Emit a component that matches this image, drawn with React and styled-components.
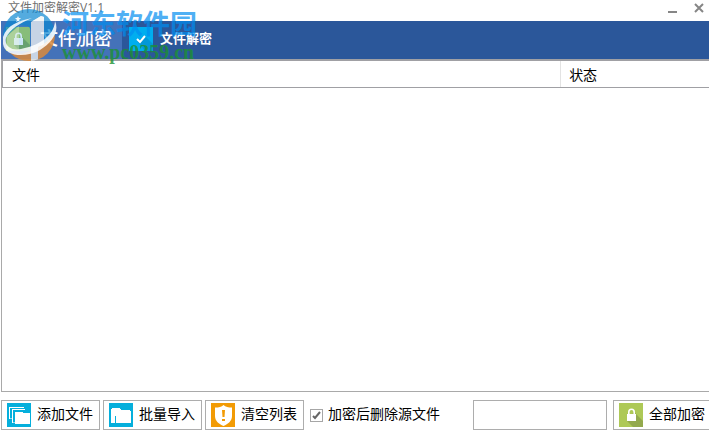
import { useState } from "react";
import styled, { createGlobalStyle } from "styled-components";

const GlobalStyle = createGlobalStyle`
  * {
    box-sizing: border-box;
  }

  body {
    margin: 0;
    background-color: #fff;
    color: #000;
    font-family: "Liberation Sans", "Noto Sans CJK SC", sans-serif;
    font-size: 14px;
    overflow: hidden;
  }

  button,
  input {
    font: inherit;
    color: inherit;
  }
`;

const Window = styled.div`
  position: relative;
  display: flex;
  flex-direction: column;
  height: 100vh;
  overflow: hidden;
`;

const TitleBar = styled.header`
  display: flex;
  justify-content: space-between;
  align-items: center;
  height: 21px;
  padding: 0 4px 5px 8px;
`;

const Title = styled.h1`
  margin: 0;
  font-family: "Open Sans", "Noto Sans CJK SC", sans-serif;
  font-size: 12px;
  line-height: 16px;
  font-weight: 400;
  color: #707070;
`;

const WindowControls = styled.div`
  display: flex;
  gap: 14px;
`;

const ControlButton = styled.button`
  display: flex;
  padding: 0;
  border: 0;
  background: none;
  cursor: pointer;
`;

const TabBar = styled.nav`
  display: flex;
  height: 38px;
  margin-left: 1px;
  background-color: #2b579a;
`;

const Tab = styled.button`
  display: flex;
  align-items: center;
  gap: ${({ $active }) => ($active ? "10px" : "7px")};
  padding: ${({ $active }) => ($active ? "0 10px 2px 5px" : "0 10px 2px 7px")};
  border: 0;
  background-color: ${({ $active }) => ($active ? "#4472b9" : "transparent")};
  color: #fff;
  font-size: ${({ $active }) => ($active ? "18px" : "13px")};
  font-weight: ${({ $active }) => ($active ? "500" : "700")};
  white-space: nowrap;
  cursor: pointer;
`;

const Label = styled.span`
  padding-bottom: 4px;
`;

const FilePanel = styled.main`
  flex: 1;
  min-height: 0;
  margin-left: 1px;
  border: 1px solid #a9a9a9;
  border-top: 2px solid #a0a0a4;
  border-right: 0;
`;

const FileTable = styled.table`
  width: 100%;
  border-collapse: collapse;
  table-layout: fixed;
`;

const HeaderCell = styled.th`
  width: ${({ $width }) => $width || "auto"};
  height: 26px;
  padding: 2px 0 0 ${({ $first }) => ($first ? "9px" : "8px")};
  border-left: ${({ $first }) => ($first ? "1px solid #a0a0a4" : "1px solid #e3e3e3")};
  border-bottom: 1px solid #a0a0a4;
  font-weight: 400;
  line-height: 20px;
  text-align: left;
`;

const ActionBar = styled.footer`
  display: flex;
  align-items: center;
  gap: 3px;
  padding: 8px 0 15px 1px;
`;

const ActionButton = styled.button`
  display: flex;
  flex-shrink: 0;
  align-items: center;
  gap: 6px;
  width: 99px;
  height: 30px;
  padding: 0 5px;
  border: 1px solid #adadad;
  background-color: #fff;
  white-space: nowrap;
  cursor: pointer;

  svg {
    flex-shrink: 0;
  }
`;

const CheckOption = styled.label`
  display: flex;
  flex-shrink: 0;
  align-items: center;
  gap: 5px;
  margin-left: 3px;
  white-space: nowrap;
`;

const CheckFrame = styled.span`
  display: grid;

  > * {
    grid-area: 1 / 1;
  }

  svg {
    pointer-events: none;
  }

  input:not(:checked) + svg {
    visibility: hidden;
  }
`;

const CheckBox = styled.input`
  appearance: none;
  width: 13px;
  height: 13px;
  margin: 0;
  border: 1px solid #a6a6a6;
  background-color: #fff;
`;

const RightGroup = styled.div`
  display: flex;
  flex: 1;
  justify-content: flex-end;
  gap: 6px;
  min-width: 0;
  margin-right: -3px;
`;

const PasswordInput = styled.input`
  width: 134px;
  height: 30px;
  padding: 0 6px;
  border: 1px solid #adadad;
  background-color: #fff;
`;

const Watermark = styled.div`
  position: absolute;
  top: 8px;
  left: 2px;
  display: flex;
  gap: 5px;
  pointer-events: none;
`;

const WatermarkText = styled.div`
  display: flex;
  flex-direction: column;
  white-space: nowrap;
`;

const SiteName = styled.span`
  font-size: 27px;
  line-height: 34px;
  font-weight: 700;
  color: rgba(0, 141, 240, 0.7);
`;

const SiteUrl = styled.span`
  font-family: "Liberation Serif", serif;
  font-size: 20px;
  line-height: 20px;
  font-weight: 700;
  color: rgba(28, 145, 50, 0.8);
`;

function LockTile({ tile, shade }) {
  return (
    <svg width="24" height="24" viewBox="0 0 24 24" aria-hidden="true">
      <path fill={tile} d="M0 0h24v24H0z" />
      <path fill={shade} d="M15 9l9 9v6H14l-6-6z" />
      <path fill="#fff" d="M8 11h9v7H8z" />
      <path fill="none" stroke="#fff" strokeWidth="1.6" d="M9.800 11V9a2.700 2.700 0 0 1 5.400 0v2" />
    </svg>
  );
}

function CheckTile() {
  return (
    <svg width="24" height="24" viewBox="0 0 24 24" aria-hidden="true">
      <path fill="#00aeef" d="M0 0h24v24H0z" />
      <path fill="#0398d8" d="M16 9l8 8v7H16l-8-10z" />
      <path fill="none" stroke="#fff" strokeWidth="2" d="M8 12l3 3 5-6" />
    </svg>
  );
}

function FilesTile() {
  return (
    <svg width="24" height="24" viewBox="0 0 24 24" shapeRendering="crispEdges" aria-hidden="true">
      <path fill="#05afdc" d="M0 0h24v24H0z" />
      <path fill="#fff" d="M2 4h15v1H3v11H2z" />
      <path fill="#8fdaef" d="M3 15h2v1H3zM6 19h2v1H6z" />
      <path fill="#fff" d="M5 6h13v1H6v13H5z" />
      <path fill="#fff" d="M8 9h8v1h7v11H8z" />
    </svg>
  );
}

function FolderTile() {
  return (
    <svg width="24" height="24" viewBox="0 0 24 24" shapeRendering="crispEdges" aria-hidden="true">
      <path fill="#05afdc" d="M0 0h24v24H0z" />
      <path fill="#fff" d="M2 6h1V5h8v1h1v1h10v13H2z" />
      <path fill="#05afdc" d="M6 13h1v7H6zM21 7h1v1h-1z" />
    </svg>
  );
}

function ShieldTile() {
  return (
    <svg width="24" height="24" viewBox="0 0 24 24" aria-hidden="true">
      <path fill="#f29b05" d="M0 0h24v24H0z" />
      <path fill="#fff" d="M12.500 2c2 2 5 2.500 8.500 2.500V13c0 5-4 8-8.500 10C8 21 4 18 4 13V4.500C8 4.500 10.500 4 12.500 2z" />
      <path fill="#f29b05" d="M11 7h3l-.5 7h-2zM11 16h3v2h-3z" />
    </svg>
  );
}

function SiteLogo() {
  return (
    <svg width="55" height="56" viewBox="0 0 55 56" aria-hidden="true">
      <defs>
        <clipPath id="disc">
          <circle cx="27" cy="27" r="26" />
        </clipPath>
      </defs>
      <g clipPath="url(#disc)">
        <path fill="#0b88d2" fillOpacity=".7" d="M0 0h55v26L42 36V9l-3-1-10 6v8l-3-4-9-1-9 8-8 10z" />
        <path fill="#2e9cdb" fillOpacity=".25" d="M0 35l8-10 9-8 9 1 3 4v20l-14 5H0z" />
        <path fill="#d98a3c" fillOpacity=".85" d="M8 45l12 1 9-3v12H8zM36 39l6-3 13-11v31H36z" />
        <path fill="#f3f6f4" fillOpacity=".75" d="M29 14l10-6 3 1v27l-6 3v17h-7z" />
        <path fill="#f0f5d8" fillOpacity=".35" d="M5 28l12-10v24H5z" />
      </g>
      <path fill="#fff" fillOpacity=".85" d="M1 29C5 17 16 13 30 10 18 15 8 21 4 30c-2 8 6 13 15 11 16-3 33-12 34-28 5 11-4 22-15 29-14 8-35 7-37-6z" />
      <path fill="#fff" fillOpacity=".9" d="M16 8l1 2h2l-2 2 1 2-2-1-2 1 1-2-2-2h2z" />
    </svg>
  );
}

function App() {
  const [activeTab, setActiveTab] = useState("encrypt");
  const [deleteSource, setDeleteSource] = useState(true);
  const [password, setPassword] = useState("");

  return (
    <>
      <GlobalStyle />
      <Window>
        <TitleBar>
          <Title>文件加密解密V1.1</Title>
          <WindowControls>
            <ControlButton aria-label="最小化">
              <svg width="16" height="15" viewBox="0 0 16 15">
                <path fill="#868686" d="M5 10h9v2H5z" />
              </svg>
            </ControlButton>
            <ControlButton aria-label="关闭">
              <svg width="12" height="15" viewBox="0 0 12 15">
                <path stroke="#868686" strokeWidth="2" d="M2 3l8 8M10 3l-8 8" />
              </svg>
            </ControlButton>
          </WindowControls>
        </TitleBar>

        <TabBar>
          <Tab $active={activeTab === "encrypt"} onClick={() => setActiveTab("encrypt")}>
            <LockTile tile="#a5c95a" shade="#7ba54c" />
            <Label>文件加密</Label>
          </Tab>
          <Tab $active={activeTab === "decrypt"} onClick={() => setActiveTab("decrypt")}>
            <CheckTile />
            <Label>文件解密</Label>
          </Tab>
        </TabBar>

        <FilePanel>
          <FileTable>
            <thead>
              <tr>
                <HeaderCell $first $width="79%">文件</HeaderCell>
                <HeaderCell>状态</HeaderCell>
              </tr>
            </thead>
          </FileTable>
        </FilePanel>

        <ActionBar>
          <ActionButton>
            <FilesTile />
            <Label>添加文件</Label>
          </ActionButton>
          <ActionButton>
            <FolderTile />
            <Label>批量导入</Label>
          </ActionButton>
          <ActionButton>
            <ShieldTile />
            <Label>清空列表</Label>
          </ActionButton>
          <CheckOption>
            <CheckFrame>
              <CheckBox
                type="checkbox"
                checked={deleteSource}
                onChange={(e) => setDeleteSource(e.target.checked)}
              />
              <svg width="13" height="13" viewBox="0 0 13 13" aria-hidden="true">
                <path fill="none" stroke="#666" strokeWidth="2" d="M3 7l2 2 5-6" />
              </svg>
            </CheckFrame>
            <Label>加密后删除源文件</Label>
          </CheckOption>
          <RightGroup>
            <PasswordInput
              type="text"
              aria-label="密码"
              value={password}
              onChange={(e) => setPassword(e.target.value)}
            />
            <ActionButton>
              <LockTile tile="#aec957" shade="#93a94d" />
              <Label>全部加密</Label>
            </ActionButton>
          </RightGroup>
        </ActionBar>

        <Watermark>
          <SiteLogo />
          <WatermarkText>
            <SiteName>河东软件园</SiteName>
            <SiteUrl>www.pc0359.cn</SiteUrl>
          </WatermarkText>
        </Watermark>
      </Window>
    </>
  );
}

export default App;
